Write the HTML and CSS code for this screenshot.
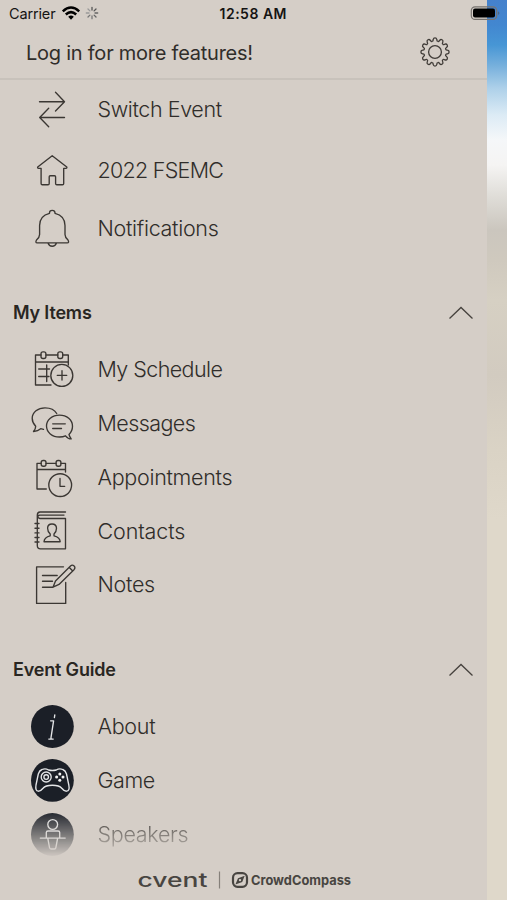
FILE: index.html
```html
<!DOCTYPE html>
<html lang="en">
<head>
<meta charset="utf-8">
<title>Event menu</title>
<link rel="stylesheet" href="styles.css">
</head>
<body>
<div class="app">
  <main class="panel">
    <div class="status">
      <span class="carrier">Carrier</span>
      <svg class="wifi" viewBox="61 5 20 16"><g fill="none" stroke="#000" stroke-width="2.5"><path d="M62.8 11.3Q71 3.8 79.2 11.3"/><path d="M65.8 14.5Q71 9.8 76.2 14.5"/></g><path fill="#000" d="M68.2 16.8Q71 14.2 73.8 16.8L71 19.8Z"/></svg>
      <svg class="spinner" viewBox="-7 -7 14 14"><g stroke-width="1.3" stroke-linecap="round"><path stroke="#555" d="M0-3V-5.7M2.1-2.1L4-4"/><path stroke="#666" d="M3 0H5.7M2.1 2.1L4 4"/><path stroke="#777" d="M0 3V5.7M-2.1 2.1L-4 4"/><path stroke="#999" d="M-3 0H-5.7M-2.1-2.1L-4-4"/></g></svg>
      <span class="time">12:58 AM</span>
    </div>
    <header class="login">
      <span class="login-text">Log in for more features!</span>
      <svg class="gear" viewBox="-16 -16 32 32"><defs><path id="tooth" d="M-2.85-10.6C-1.7-10.8-2-11.6-1.8-12.5Q-1.5-14.1 0-14.1T1.8-12.5C2-11.6 1.7-10.8 2.85-10.6"/></defs><g fill="none" stroke="#403c38" stroke-width="1.3"><use href="#tooth"/><use href="#tooth" transform="rotate(30)"/><use href="#tooth" transform="rotate(60)"/><use href="#tooth" transform="rotate(90)"/><use href="#tooth" transform="rotate(120)"/><use href="#tooth" transform="rotate(150)"/><use href="#tooth" transform="rotate(180)"/><use href="#tooth" transform="rotate(210)"/><use href="#tooth" transform="rotate(240)"/><use href="#tooth" transform="rotate(270)"/><use href="#tooth" transform="rotate(300)"/><use href="#tooth" transform="rotate(330)"/><circle r="6.4"/></g></svg>
    </header>
    <nav>
      <div class="row row-60"><svg class="icon" viewBox="28 80 48 60"><path d="M39.5 101.7H64.3M55.5 92.3L64.5 101.7L55.5 111M64.5 117.5H40M48.7 108.3L39.7 117.5L48.7 126.8"/></svg><span class="label snug">Switch Event</span></div>
      <div class="row row-62"><svg class="icon" viewBox="28 140 48 62"><path d="M52.2 155.7L66.8 167Q67.2 168.3 66 168.3H63.7V183.5Q63.7 184.7 62.5 184.7H56.8Q55.6 184.7 55.6 183.5V176.8Q55.6 175.7 54.5 175.7H50.3Q49.2 175.7 49.2 176.8V183.5Q49.2 184.7 48 184.7H42.3Q41.1 184.7 41.1 183.5V168.3H38.5Q37.3 168.3 37.7 167Z"/></svg><span class="label tightest">2022 FSEMC</span></div>
      <div class="row"><svg class="icon" viewBox="28 202 48 54"><path d="M49.5 213.3V212.7Q49.5 210.3 52.2 210.3T55 212.7V213.3C61.3 214.8 65 219.5 65 225.5V234.5Q65 237.3 68 240Q69.5 242.9 67.2 242.9H37.2Q35 242.9 36.5 240Q39.6 237.3 39.6 234.5V225.5C39.6 219.5 43.3 214.8 49.5 213.3ZM48 243Q49 246.2 52.2 246.2T56.5 243"/></svg><span class="label">Notifications</span></div>
    </nav>
    <section class="group">
      <h2 class="heading"><span class="title">My Items</span><svg class="chevron" viewBox="0 0 26 14"><path d="M1.5 12.5L13 1.5L24.5 12.5"/></svg></h2>
      <div class="row"><svg class="icon" viewBox="28 343 48 54"><path d="M41 355H35.5V385H51M46 355H57.8M62.7 355H68.3V362H35.5M68.3 362V365M38.7 369H49.5M38.7 376.5H49M46.7 365V381.5"/><rect x="41" y="351.8" width="4.9" height="6.7" rx="2"/><rect x="57.8" y="351.8" width="4.9" height="6.7" rx="2"/><circle cx="61.8" cy="375.4" r="11"/><path d="M57.3 375.4H66.7M62 370.7V380.1"/></svg><span class="label tight">My Schedule</span></div>
      <div class="row"><svg class="icon" viewBox="28 397 48 54"><path d="M56.7 413.5C54.5 409.5 49.5 407.8 45 407.8C38 407.8 32.2 412.2 32.2 418.3C32.2 421.5 33.5 424 35.7 426.3Q35.7 429 33.5 431.5Q38 431 40.7 428.7L43.5 429.3M69 434.5C71 432.5 72.5 429.5 72.5 426.3C72.5 419.8 66.8 415.1 59.5 415.1S46.5 419.8 46.5 426.1S52.2 437 59.5 437C61.8 437 63.7 436.7 65.5 435.8Q68 438.9 71.2 438.9Q69.6 437 69 434.5M52.7 423.8H65.3M52.7 428.5H61.5"/></svg><span class="label tight">Messages</span></div>
      <div class="row"><svg class="icon" viewBox="28 451 48 54"><path d="M41 463.3H37V489H46.3M46 463.3H56M61 463.3H65.5V469.5H37M65.5 469.5V472"/><rect x="41.2" y="460.5" width="4.8" height="5.7" rx="2"/><rect x="56.1" y="460.5" width="4.8" height="5.7" rx="2"/><circle cx="60.2" cy="485.1" r="11.4"/><path d="M60 478.5V486.3H64.7"/></svg><span class="label">Appointments</span></div>
      <div class="row row-53"><svg class="icon" viewBox="28 504.5 48 53"><path d="M65.5 511.5H40Q37.3 511.5 37.3 514.7V545Q37.3 548.3 40.5 548.3H65.5V518H40Q37.5 517.5 38 515.5Q38.5 514.6 40 514.6H64M35 523H39M35 527.7H39M35 532.4H39M35 537H39M35 541.5H39M50.2 535.3V533.5Q47.6 531 47.6 527.7Q47.6 523.5 52 523.5T56.5 527.7Q56.5 531 54 533.5V535.3Q60 536.7 60.2 541.2H44Q44.2 536.7 50.2 535.3Z"/></svg><span class="label loose">Contacts</span></div>
      <div class="row"><svg class="icon" viewBox="28 558 48 54"><path d="M63.5 566.8H36.6V603.4H65.7V582.5M42.5 575.5H57.2M42.5 581.2H52.5M42.5 587.2H53M53 587.2L55.5 581L70.5 566Q72.3 564.2 74.1 566Q75.7 567.6 74 569.7L59 584.4ZM69.3 567.5L72.5 570.8"/></svg><span class="label">Notes</span></div>
    </section>
    <section class="group group-last">
      <h2 class="heading"><span class="title">Event Guide</span><svg class="chevron" viewBox="0 0 26 14"><path d="M1.5 12.5L13 1.5L24.5 12.5"/></svg></h2>
      <div class="row"><svg class="icon badge" viewBox="28 700 48 54"><circle class="disc" cx="52.4" cy="726.5" r="21.4"/><path d="M54.8 714.9L54.4 717.6M50.6 720.8H53.6L51 737.6Q50.8 739.1 52 739.1H53.2M48.8 739.1H52"/></svg><span class="label">About</span></div>
      <div class="row"><svg class="icon badge" viewBox="28 754 48 54"><circle class="disc" cx="52.4" cy="780.4" r="21.4"/><path d="M42 769.5Q45.5 768 48.5 770Q52.4 771 56.3 770Q59.3 768 62.8 769.5Q65.5 770.5 66.5 774L68.8 785Q70 790.8 66.5 791.2Q64 791.2 61.5 788Q59.5 785.2 52.4 785.2T43.3 788Q40.8 791.2 38.3 791.2Q35 790.8 36 785L38.3 774Q39.3 770.5 42 769.5Z"/><circle cx="46.2" cy="777" r="5"/><circle cx="46.2" cy="777" r="2.3"/><g class="dots"><circle cx="59.8" cy="773.9" r="1.5"/><circle cx="59.8" cy="780.3" r="1.5"/><circle cx="56.6" cy="777.1" r="1.5"/><circle cx="63" cy="777.1" r="1.5"/></g></svg><span class="label snug">Game</span></div>
      <div class="row row-53 fading"><svg class="icon badge" viewBox="28 807.5 48 53"><circle class="disc" cx="52.4" cy="834" r="21.4"/><circle cx="52.7" cy="824" r="4.9"/><path d="M46.3 837.3V832Q46.3 830.5 48 830.5H58Q59.7 830.5 59.7 832V837.3M40.3 837.6H65.2M47.8 837.8L49.5 847Q49.8 848.5 51 848.5H54.5Q55.6 848.5 55.9 847L57.6 837.8"/></svg><span class="label">Speakers</span></div>
    </section>
    <footer class="footer">
      <svg class="brands" viewBox="136 866 218 28"><text class="cvent" x="137.5" y="886.8" textLength="70" lengthAdjust="spacingAndGlyphs">cvent</text><path class="divider" d="M219.5 871.5V888.5"/><rect class="mark" x="233" y="873.2" width="14" height="13.6" rx="4.5"/><path class="needle" d="M244.7 875.8L242.2 881.9L235.4 884.4L238 878.2Z"/><circle cx="240" cy="880.1" r="1.2" fill="#d5cec7"/><text class="crowd" x="251" y="884.8" textLength="100" lengthAdjust="spacingAndGlyphs">CrowdCompass</text></svg>
    </footer>
  </main>
  <aside class="backdrop"></aside>
  <svg class="battery" viewBox="470 5 32 18"><rect x="471.3" y="6.8" width="25.4" height="12.6" rx="3.7" fill="none" stroke="#77736f" stroke-width="1.2"/><rect x="473" y="8.6" width="22" height="9" rx="2" fill="#000"/><path d="M498.3 11.3Q500.3 13.2 498.3 15.1Z" fill="#555d68"/></svg>
</div>
</body>
</html>
```

FILE: styles.css
```css
* { box-sizing: border-box; }
body { margin: 0; background: #d5cec7; font-family: Inter, "Liberation Sans", sans-serif; color: #302d2a; }
.app { position: relative; display: flex; width: 507px; height: 900px; overflow: hidden; }
.panel { width: 487px; height: 900px; display: flex; flex-direction: column; background: #d5cec7; white-space: nowrap; }
.backdrop { flex: 1; background: linear-gradient(to bottom, #4581cc 0, #4287d0 25px, #4796d5 45px, #75afdc 65px, #add0e9 88px, #dcebf5 115px, #f5f7f9 140px, #f5f4f3 165px, #e0ded9 195px, #cbc6be 230px, #cfc9be 260px, #d6d0c3 300px, #d2cbc0 375px, #dad3c5 450px, #dfd8ca 520px, #dfd8ca 900px); }
.battery { position: absolute; left: 470px; top: 5px; width: 32px; height: 18px; }
.status { height: 27px; display: flex; align-items: center; padding-left: 9px; color: #151413; }
.carrier { width: 48px; font-size: 14.5px; letter-spacing: -.15px; }
.wifi { width: 20px; height: 16px; margin-left: 4px; margin-bottom: 1px; }
.spinner { width: 14px; height: 14px; margin-left: 4px; margin-bottom: 1px; }
.time { margin-left: 120.5px; font-size: 14px; font-weight: 600; letter-spacing: .5px; }
.login { height: 53px; display: flex; align-items: center; justify-content: space-between; padding: 0 36px 1px 26px; border-bottom: 2px solid #c8c2bb; }
.login-text { font-size: 20px; letter-spacing: -.24px; padding-top: 2px; }
.gear { width: 32px; height: 32px; }
.row { height: 54px; flex: none; display: flex; align-items: center; gap: 21.5px; padding-left: 28px; }
.row-60 { height: 60px; }
.row-62 { height: 62px; }
.row-53 { height: 53px; }
.icon { width: 48px; height: 100%; flex: none; fill: none; stroke: #3b3733; stroke-width: 1.35; stroke-linejoin: round; stroke-linecap: round; }
.badge { stroke: #e4e5e7; }
.disc { fill: #1b1f27; stroke: none; }
.dots { fill: #f2f2f2; stroke: none; }
.label { font-size: 21.5px; font-weight: 300; letter-spacing: -.3px; padding-bottom: 2px; }
.loose { letter-spacing: -.12px; }
.snug { letter-spacing: -.4px; }
.tight { letter-spacing: -.58px; }
.tightest { letter-spacing: -.72px; }
.group { margin-top: 37px; }
.group-last { margin-top: 38px; }
.heading { height: 40px; margin: 0 0 10px; padding: 0 13px 0 13px; display: flex; align-items: center; justify-content: space-between; font-size: 18px; font-weight: 600; color: #292622; }
.title { letter-spacing: -.18px; padding-bottom: 2px; }
.chevron { width: 26px; height: 14px; fill: none; stroke: #46423e; stroke-width: 1.3; }
.fading { -webkit-mask-image: linear-gradient(#000 2px, transparent 50px); mask-image: linear-gradient(#000 2px, transparent 50px); }
.footer { flex: 1; display: flex; align-items: flex-start; padding: 5px 0 0 136px; }
.brands { width: 218px; height: 28px; }
.brands text { fill: #484541; }
.cvent { font-size: 18.5px; font-weight: 500; }
.crowd { font-size: 13px; font-weight: 700; }
.divider { stroke: #85807a; stroke-width: 1.2; }
.mark { fill: none; stroke: #484541; stroke-width: 2.2; }
.needle { fill: #484541; }
```
